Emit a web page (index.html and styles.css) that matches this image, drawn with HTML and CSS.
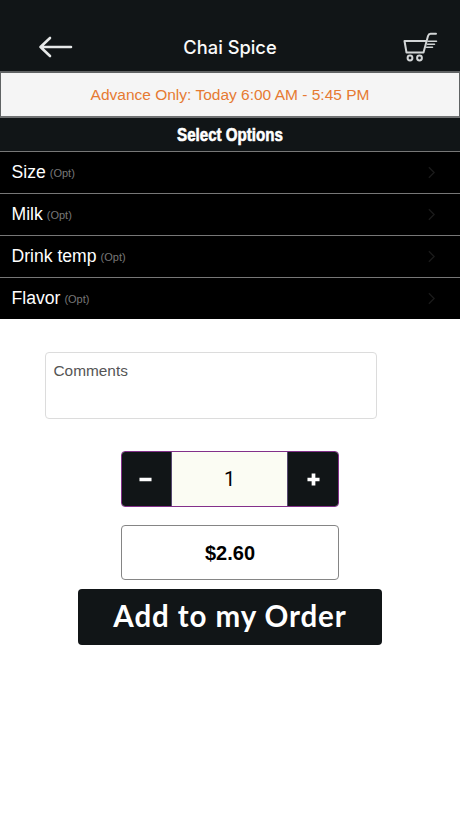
FILE: index.html
```html
<!DOCTYPE html>
<html lang="en">
<head>
<meta charset="utf-8">
<title>Chai Spice</title>
<link rel="stylesheet" href="styles.css">
</head>
<body>
<header class="topbar">
  <svg class="back" viewBox="0 0 36 24" role="img" aria-label="Back"><path d="M13 3 L3.5 12 L13 21 M3.5 12 H34"/></svg>
  <h1 class="title"><span>Chai Spice</span></h1>
  <svg class="cart" viewBox="0 0 36 32" role="img" aria-label="Cart"><path d="M24.5 10H2.5L4.5 21.5H21.5L26 5Q26.7 2.8 28.5 2.8H34"/><path class="speed" d="M26 10.3H34.5M25.5 13.3H32.5M24.5 16.2H30.5"/><circle cx="8" cy="27" r="2.4"/><circle cx="17.5" cy="27" r="2.4"/></svg>
</header>
<div class="notice"><span>Advance Only: Today 6:00 AM - 5:45 PM</span></div>
<h2 class="section"><span>Select Options</span></h2>
<ul class="options">
  <li><span>Size</span><small>(Opt)</small><svg viewBox="0 0 8 14"><path d="M1 1L7 7L1 13"/></svg></li>
  <li><span>Milk</span><small>(Opt)</small><svg viewBox="0 0 8 14"><path d="M1 1L7 7L1 13"/></svg></li>
  <li><span>Drink temp</span><small>(Opt)</small><svg viewBox="0 0 8 14"><path d="M1 1L7 7L1 13"/></svg></li>
  <li><span>Flavor</span><small>(Opt)</small><svg viewBox="0 0 8 14"><path d="M1 1L7 7L1 13"/></svg></li>
</ul>
<main class="order">
  <div class="comments">Comments</div>
  <div class="stepper">
    <button class="minus" aria-label="Decrease"><svg viewBox="0 0 14 14"><path d="M.5 7H13.5"/></svg></button>
    <div class="count">1</div>
    <button aria-label="Increase"><svg viewBox="0 0 14 14"><path d="M.5 7H13.5M7 .5V13.5"/></svg></button>
  </div>
  <div class="price">$2.60</div>
  <button class="add"><span>Add to my Order</span></button>
</main>
</body>
</html>
```
FILE: styles.css
```css
* { box-sizing: border-box; }
body {
  margin: 0;
  min-height: 818px;
  background: #fff;
  font-family: "Liberation Sans", Arial, sans-serif;
}
svg { display: block; fill: none; }
button { border: 0; padding: 0; margin: 0; }
.topbar {
  height: 71px;
  padding: 22px 22px 0 37px;
  background: #111517;
  display: grid;
  grid-template-columns: 36px 1fr 36px;
  align-items: center;
}
.back { width: 36px; height: 24px; stroke: #e6e8e8; stroke-width: 2.6; stroke-linecap: round; stroke-linejoin: round; }
.title {
  margin: 0;
  padding-right: 15px;
  text-align: center;
  font: 500 18.3px/24px Inter, sans-serif;
  color: #fafafa;
}
.cart { width: 36px; height: 32px; stroke: #d2d5d6; stroke-width: 2; stroke-linejoin: round; stroke-linecap: round; }
.cart .speed { stroke-width: 1.5; }
.notice {
  height: 47px;
  border: 1px solid #606364;
  border-top-width: 2px;
  border-bottom: 2px solid #707273;
  background: #f5f5f5;
  color: #e67a32;
  font-size: 15.5px;
  line-height: 43px;
  text-align: center;
}
.section {
  margin: 0;
  height: 33px;
  background: #111517;
  color: #fff;
  font: 700 18px/34px "Liberation Sans", sans-serif;
  text-align: center;
  -webkit-text-stroke: .6px #fff;
}
.section span { display: inline-block; transform: scaleX(.84); }
.options { margin: 0; padding: 0; list-style: none; background: #000; }
.options li {
  height: 42px;
  border-top: 1px solid #777;
  padding: 0 25px 0 11.5px;
  display: flex;
  align-items: center;
  color: #fff;
  font-size: 17.6px;
}
.options small { margin-left: 4px; padding-top: 1px; font-size: 11px; color: #777; }
.options svg { width: 7px; height: 13px; margin-left: auto; stroke: #1b1b1b; stroke-width: 1.5; }
.order { display: flex; flex-direction: column; align-items: center; padding-top: 33px; }
.comments {
  align-self: flex-start;
  margin-left: 45px;
  width: 332px;
  height: 67px;
  padding: 9px 7.5px;
  border: 1px solid #dcdcdc;
  border-radius: 4px;
  color: #555;
  font-size: 15.4px;
  line-height: 18px;
}
.stepper {
  margin-top: 32px;
  width: 218px;
  height: 56px;
  border: 1px solid #83308a;
  border-radius: 4px;
  overflow: hidden;
  display: grid;
  grid-template-columns: 49px 1fr 50px;
}
.stepper button { background: #111517; display: grid; place-items: center; }
.stepper .minus { padding-right: 2px; }
.stepper svg { width: 13px; height: 13px; stroke: #fff; stroke-width: 4; }
.count {
  background: #fbfcf3;
  border: solid #55486f;
  border-width: 0 1px;
  text-align: center;
  font: 400 20px/54px Roboto, sans-serif;
}
.price {
  margin-top: 18px;
  width: 218px;
  height: 55px;
  border: 1px solid #858585;
  border-radius: 4px;
  text-align: center;
  font-size: 20px;
  font-weight: 700;
  line-height: 54px;
  color: #000;
}
.add {
  margin-top: 9px;
  width: 304px;
  height: 56px;
  padding-bottom: 3px;
  border-radius: 4px;
  background: #111517;
  color: #fff;
  font: 700 29.5px/52px Lato, sans-serif;
  letter-spacing: .9px;
}
```
